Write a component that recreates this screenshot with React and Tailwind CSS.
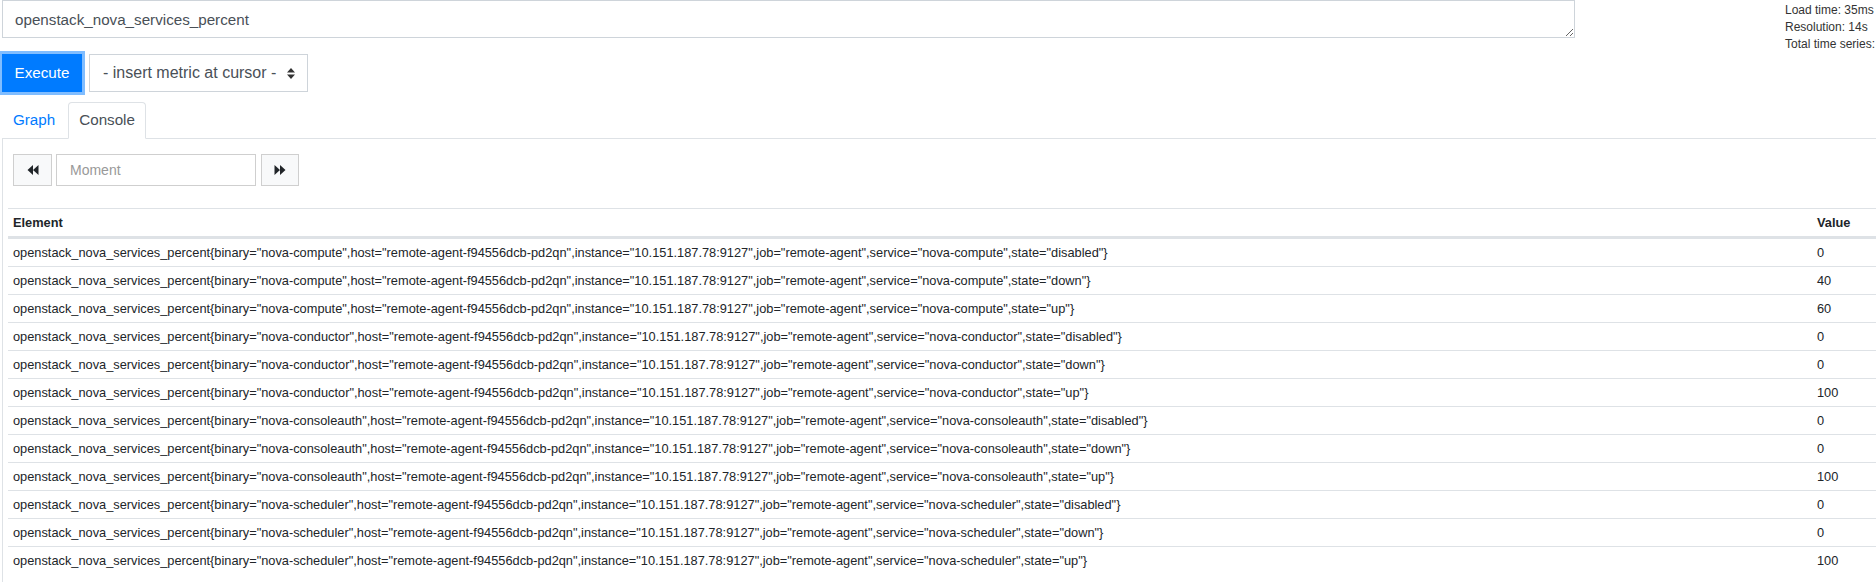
import React from 'react';

const FONT = { fontFamily: '"Liberation Sans", Arial, sans-serif' };

const services = ['nova-compute', 'nova-conductor', 'nova-consoleauth', 'nova-scheduler'];
const values = {
  'nova-compute': [0, 40, 60],
  'nova-conductor': [0, 0, 100],
  'nova-consoleauth': [0, 0, 100],
  'nova-scheduler': [0, 0, 100],
};
const states = ['disabled', 'down', 'up'];

const rows = services.flatMap(svc =>
  states.map((st, i) => ({
    key: `${svc}-${st}`,
    element: `openstack_nova_services_percent{binary="${svc}",host="remote-agent-f94556dcb-pd2qn",instance="10.151.187.78:9127",job="remote-agent",service="${svc}",state="${st}"}`,
    value: values[svc][i],
  }))
);

const BackIcon = () => (
  <svg width="12" height="10" viewBox="0 0 12 10">
    <path d="M6 0 L0.5 5 L6 10 Z M11.5 0 L6 5 L11.5 10 Z" fill="#212529" />
  </svg>
);

const FwdIcon = () => (
  <svg width="12" height="10" viewBox="0 0 12 10">
    <path d="M0.5 0 L6 5 L0.5 10 Z M6 0 L11.5 5 L6 10 Z" fill="#212529" />
  </svg>
);

const SortArrows = () => (
  <svg width="8" height="11" viewBox="0 0 8 11">
    <path d="M4 0 L8 4.5 L0 4.5 Z M0 6.5 L8 6.5 L4 11 Z" fill="#333" />
  </svg>
);

export default function App() {
  return (
    <div className="w-[1876px] h-[582px] overflow-hidden bg-white text-[#212529]" style={FONT}>
      {/* query + stats */}
      <div className="flex h-[38px]">
        <div className="w-[1785px] shrink-0 pl-[2px]">
          <textarea
            readOnly
            value="openstack_nova_services_percent"
            className="block w-[1573px] h-[38px] border border-[#ced4da] px-3 py-[7px] text-[15.2px] leading-6 text-[#495057] resize-y outline-none"
            style={FONT}
          />
        </div>
        <div className="pt-[2px] text-[12px] leading-[17px] text-[#333] whitespace-nowrap">
          <div>Load time: 35ms</div>
          <div>Resolution: 14s</div>
          <div>Total time series: 12</div>
        </div>
      </div>

      {/* execute row */}
      <div className="flex items-center gap-[7px] mt-[16px] pl-[2px]">
        <button className="w-[80px] h-[38px] bg-[#007bff] text-white text-[15.2px] shadow-[0_0_0_3px_#80bdff]">
          Execute
        </button>
        <div className="w-[219px] h-[38px] border border-[#ced4da] flex items-center pl-[13px] pr-[12px] text-[16px] text-[#495057]">
          <span className="flex-1">- insert metric at cursor -</span>
          <SortArrows />
        </div>
      </div>

      {/* tabs */}
      <div className="mt-[10px] ml-[2px] flex border-b border-[#dee2e6] text-[15.2px] leading-6">
        <div className="px-[10px] py-[5px] border border-transparent text-[#007bff]">Graph</div>
        <div className="ml-[2px] -mb-px px-[10px] py-[5px] border border-[#dee2e6] border-b-white rounded-t-[4px] bg-white text-[#495057]">
          Console
        </div>
      </div>

      {/* tab content */}
      <div className="ml-[2px] border-l border-[#dee2e6] pl-[10px] pt-[15px] h-[500px]">
        <div className="flex items-center h-[32px]">
          <button className="w-[39px] h-[32px] bg-[#f8f9fa] border border-[#cfcfcf] flex items-center justify-center">
            <BackIcon />
          </button>
          <div className="ml-[4px] w-[200px] h-[32px] border border-[#cfcfcf] flex items-center pl-[13px] text-[14px] text-[#999]">
            Moment
          </div>
          <button className="ml-[5px] w-[38px] h-[32px] bg-[#f8f9fa] border border-[#cfcfcf] flex items-center justify-center">
            <FwdIcon />
          </button>
        </div>

        <div className="mt-[22px] -ml-[5px] w-[1920px] text-[12.8px] leading-[17px]">
          <div className="flex border-t border-b-2 border-[#dee2e6] font-bold">
            <div className="w-[1804px] shrink-0 px-[5px] py-[5px]">Element</div>
            <div className="flex-1 px-[5px] py-[5px]">Value</div>
          </div>
          {rows.map(r => (
            <div key={r.key} className="flex border-t border-[#dee2e6] first:border-t-0">
              <div className="w-[1804px] shrink-0 px-[5px] py-[5px] whitespace-nowrap">{r.element}</div>
              <div className="flex-1 px-[5px] py-[5px]">{r.value}</div>
            </div>
          ))}
        </div>
      </div>
    </div>
  );
}
